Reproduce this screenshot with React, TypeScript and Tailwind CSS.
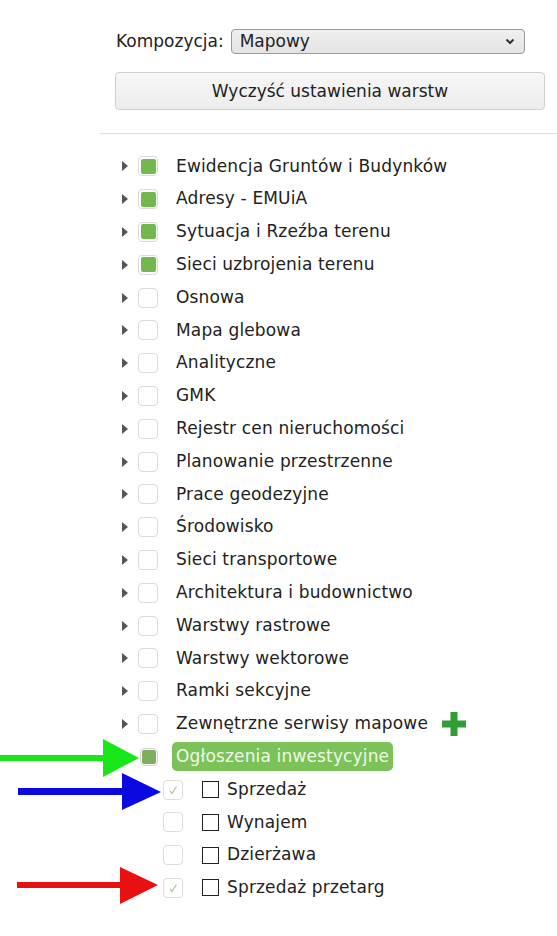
import type { ReactNode } from "react"

const layers: { name: string; on: boolean; plus?: boolean }[] = [
	{ name: "Ewidencja Gruntów i Budynków", on: true },
	{ name: "Adresy - EMUiA", on: true },
	{ name: "Sytuacja i Rzeźba terenu", on: true },
	{ name: "Sieci uzbrojenia terenu", on: true },
	{ name: "Osnowa", on: false },
	{ name: "Mapa glebowa", on: false },
	{ name: "Analityczne", on: false },
	{ name: "GMK", on: false },
	{ name: "Rejestr cen nieruchomości", on: false },
	{ name: "Planowanie przestrzenne", on: false },
	{ name: "Prace geodezyjne", on: false },
	{ name: "Środowisko", on: false },
	{ name: "Sieci transportowe", on: false },
	{ name: "Architektura i budownictwo", on: false },
	{ name: "Warstwy rastrowe", on: false },
	{ name: "Warstwy wektorowe", on: false },
	{ name: "Ramki sekcyjne", on: false },
	{ name: "Zewnętrzne serwisy mapowe", on: false, plus: true },
]

const ads = [
	{ name: "Sprzedaż", on: true },
	{ name: "Wynajem", on: false },
	{ name: "Dzierżawa", on: false },
	{ name: "Sprzedaż przetarg", on: true },
]

function Caret() {
	return (
		<svg width="6" height="10" viewBox="0 0 6 10" className="shrink-0">
			<path d="M0 0 L6 5 L0 10 Z" fill="#555" />
		</svg>
	)
}

function Box({ on }: { on: boolean }) {
	return (
		<span className="w-[20px] h-[20px] shrink-0 rounded-[4px] border border-[#dadada] bg-white flex items-center justify-center">
			{on && <span className="w-[15px] h-[15px] rounded-[2px] bg-[#72b84f]" />}
		</span>
	)
}

function Row({ children }: { children: ReactNode }) {
	return <div className="h-[32.8px] flex items-center">{children}</div>
}

function Plus() {
	return (
		<svg width="24" height="24" viewBox="0 0 24 24" className="ml-[14px]">
			<path d="M8.5 0h7v8.5H24v7h-8.5V24h-7v-8.5H0v-7h8.5z" fill="#2f9e35" />
		</svg>
	)
}

export default function App() {
	return (
		<div className="relative min-h-screen bg-white text-[#222] font-['DejaVu_Sans',sans-serif] text-[17px]">
			<div className="ml-[100px]">
				<div className="pl-[16px] pr-[12px] pt-[29px]">
					<div className="flex items-center h-[25px]">
						<span className="text-[#222]">Kompozycja:</span>
						<div className="ml-[7px] w-[294px] h-[25px] rounded-[4px] border border-[#9a9a9a] bg-gradient-to-b from-[#efefef] to-[#e4e4e4] flex items-center pl-[8px] pr-[9px]">
							<span className="flex-1 text-[17px]">Mapowy</span>
							<svg width="10" height="7" viewBox="0 0 10 7">
								<path d="M1.5 1.5 L5 5 L8.5 1.5" stroke="#333" strokeWidth="2" fill="none" />
							</svg>
						</div>
					</div>
					<button className="mt-[18px] -ml-px w-[430px] h-[38px] rounded-[4px] border border-[#cfcfcf] bg-gradient-to-b from-[#f7f7f7] to-[#ececec] text-[17px] text-[#222] flex items-center justify-center pt-[2px]">
						Wyczyść ustawienia warstw
					</button>
				</div>
				<div className="mt-[23px] border-t border-[#dedede]" />
				<div className="pt-[16px]">
					{layers.map((l) => (
						<Row key={l.name}>
							<span className="ml-[22px]">
								<Caret />
							</span>
							<span className="ml-[10px]">
								<Box on={l.on} />
							</span>
							<span className="ml-[18px] whitespace-nowrap tracking-[0.15px]">{l.name}</span>
							{l.plus && <Plus />}
						</Row>
					))}
					<Row>
						<span className="ml-[40px] w-[18px] h-[18px] rounded-[4px] border border-[#d4d4d4] bg-white flex items-center justify-center">
							<span className="w-[14px] h-[14px] rounded-[2px] bg-[#7fae5e]" />
						</span>
						<span className="ml-[14px] h-[29px] px-[4px] rounded-[5px] bg-[#7cc258] text-[#eef8e8] flex items-center whitespace-nowrap tracking-[0.15px]">
							Ogłoszenia inwestycyjne
						</span>
					</Row>
					{ads.map((a) => (
						<Row key={a.name}>
							<span className="ml-[63px] w-[20px] h-[20px] rounded-[4px] border border-[#dcdcdc] bg-white flex items-center justify-center">
								{a.on && (
									<svg width="10" height="10" viewBox="0 0 10 10">
										<path d="M2 6 L4 8.5 L8.5 1.5" stroke="#a9c99a" strokeWidth="1.3" fill="none" />
									</svg>
								)}
							</span>
							<span className="ml-[19px] w-[17px] h-[17px] border-[1.5px] border-[#222] bg-white" />
							<span className="ml-[8px] whitespace-nowrap tracking-[0.15px]">{a.name}</span>
						</Row>
					))}
				</div>
			</div>

			{/* annotation arrows */}
			<svg className="absolute left-0 top-0 pointer-events-none" width="557" height="936">
				<rect x="0" y="755" width="106" height="6" fill="#19e619" />
				<polygon points="103,739 139,758 103,777" fill="#19e619" />
				<rect x="18" y="788" width="106" height="7" fill="#0a0ae0" />
				<polygon points="122,773 161,792 122,810" fill="#0a0ae0" />
				<rect x="17" y="882" width="105" height="6" fill="#e81010" />
				<polygon points="120,867 158,885 120,904" fill="#e81010" />
			</svg>
		</div>
	)
}
